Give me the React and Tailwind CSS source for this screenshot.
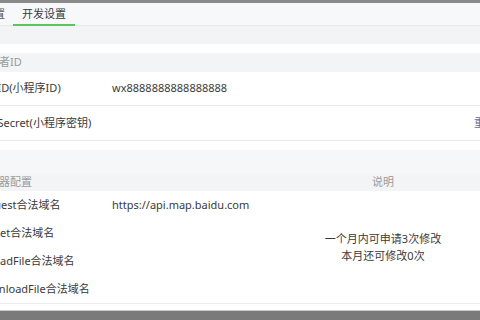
import React from "react";

const font = { fontFamily: '"Noto Sans", "Noto Sans CJK SC", sans-serif' };

const domains = [
  { name: "request合法域名", value: "https://api.map.baidu.com" },
  { name: "socket合法域名", value: "" },
  { name: "uploadFile合法域名", value: "" },
  { name: "downloadFile合法域名", value: "" },
];

const App = () => {
  return (
    <div
      className="w-[480px] h-[320px] overflow-hidden bg-white text-[11px] text-[#3a3a3a] flex flex-col"
      style={font}
    >
      <div className="h-[3px] bg-[#8a8a8a]" />
      <div className="w-[540px] -ml-[23px] flex flex-col flex-1">
        {/* tabs */}
        <div className="h-[23px] bg-[#f7f8f9] border-b border-[#e6e8ea] flex items-end gap-[8px]">
          <div className="-ml-[16px] h-full flex items-center text-[#555]">基本设置</div>
          <div className="h-full flex items-center px-[9px] border-b-2 border-[#5cc45c] -mb-px">
            开发设置
          </div>
        </div>
        <div className="h-[18px] bg-[#f3f4f6]" />
        <div className="h-[9px] bg-white" />

        {/* developer id */}
        <div className="h-[19px] bg-[#f3f4f6] flex items-center text-[#9a9a9a]">开发者ID</div>
        <div className="h-[34px] border-b border-[#e8e9eb] grid grid-cols-[135px_1fr] items-center">
          <span>AppID(小程序ID)</span>
          <span>wx8888888888888888</span>
        </div>
        <div className="h-[35px] border-b border-[#e8e9eb] flex items-center">
          <span>AppSecret(小程序密钥)</span>
          <span className="ml-auto mr-[21px] text-[#5f6f94]">重置</span>
        </div>
        <div className="h-[9px] bg-white" />
        <div className="h-[24px] bg-[#f6f7f8]" />

        {/* server config */}
        <div className="h-[17px] bg-[#f3f4f6] grid grid-cols-[330px_152px] items-center text-[#9a9a9a]">
          <span>服务器配置</span>
          <span className="text-center">说明</span>
        </div>
        <div className="grid grid-cols-[135px_195px_152px] grid-rows-[repeat(4,28px)] border-b border-[#eceef0]">
          {domains.map((d, i) => (
            <React.Fragment key={d.name}>
              <span className="flex items-center" style={{ gridRow: i + 1, gridColumn: 1 }}>
                {d.name}
              </span>
              <span className="flex items-center" style={{ gridRow: i + 1, gridColumn: 2 }}>
                {d.value}
              </span>
            </React.Fragment>
          ))}
          <div className="col-start-3 row-start-1 row-span-4 flex flex-col items-center justify-center leading-[17px]">
            <span>一个月内可申请3次修改</span>
            <span>本月还可修改0次</span>
          </div>
        </div>
        <div className="h-[6px] bg-white" />
        <div className="h-px bg-[#c8c8c8]" />
        <div className="flex-1 bg-[#7a7a7a]" />
      </div>
    </div>
  );
};

export default App;
